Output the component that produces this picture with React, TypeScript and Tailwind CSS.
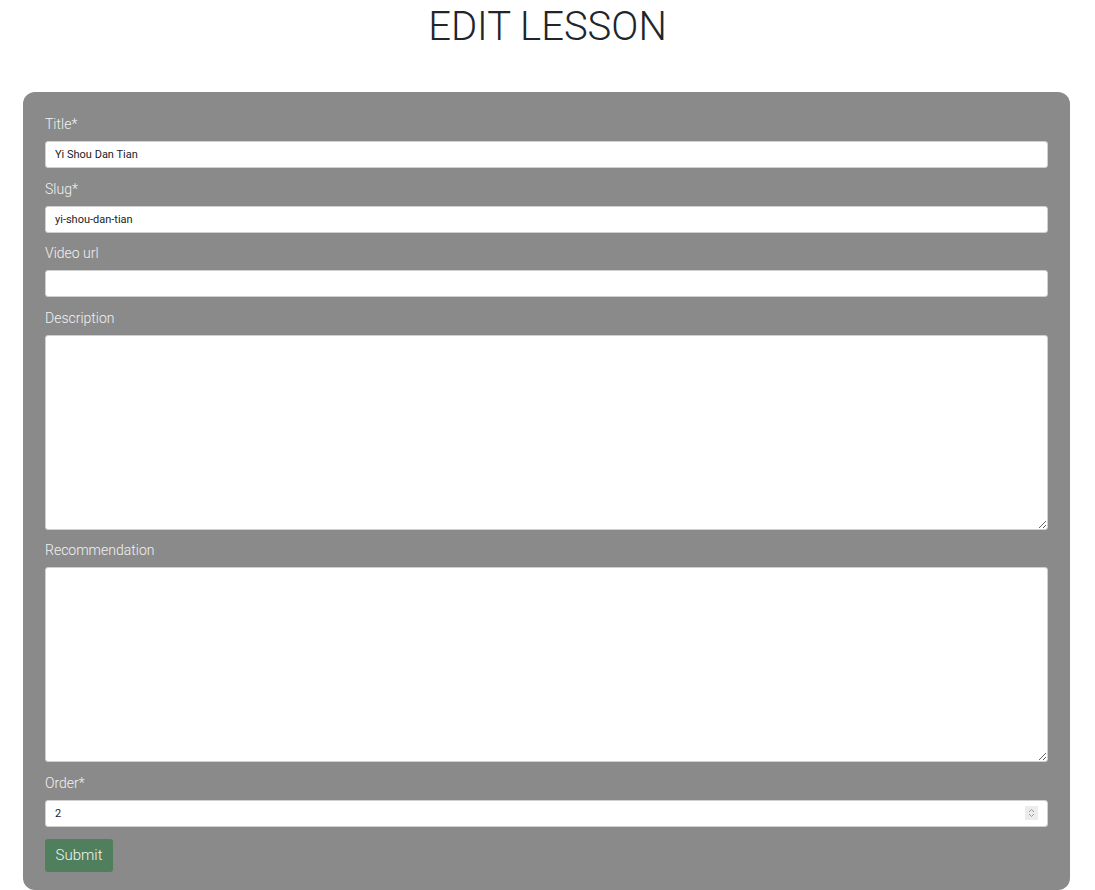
import React from "react";

const label = "block text-[14px] leading-5 font-light text-[#f2f2f2] mb-[7px]";
const input =
  "block w-full h-[27px] rounded-[3px] border border-[#d0d0d0] bg-white px-[9px] text-[11px] text-[#222] outline-none";
const area =
  "block w-full h-[195px] rounded-[3px] border border-[#d0d0d0] bg-white px-[9px] py-1 text-[11px] text-[#222] outline-none";

export default function App() {
  return (
    <div className="min-h-screen bg-white font-['Roboto',sans-serif] pt-[3px]">
      <h1 className="text-center text-[40px] leading-[48px] font-light text-[#212529] mb-[41px]">
        EDIT LESSON
      </h1>

      <form className="ml-[23px] w-[1047px] rounded-[12px] bg-[#8a8a8a] px-[22px] pt-[22px] pb-[18px]">
        <div className="mb-[10.5px]">
          <label className={label}>Title*</label>
          <input className={input} defaultValue="Yi Shou Dan Tian" />
        </div>
        <div className="mb-[10.5px]">
          <label className={label}>Slug*</label>
          <input className={input} defaultValue="yi-shou-dan-tian" />
        </div>
        <div className="mb-[10.5px]">
          <label className={label}>Video url</label>
          <input className={input} defaultValue="" />
        </div>
        <div className="mb-[10.5px]">
          <label className={label}>Description</label>
          <textarea className={area} />
        </div>
        <div className="mb-[10.5px]">
          <label className={label}>Recommendation</label>
          <textarea className={area} />
        </div>
        <div className="mb-3">
          <label className={label}>Order*</label>
          <div className="relative">
            <input className={input} defaultValue="2" />
            <div className="absolute right-[10px] top-[6px] w-[13px] h-[14px] bg-[#ececec] flex items-center justify-center">
              <svg width="7" height="10" viewBox="0 0 7 10" fill="none" stroke="#9a9a9a" strokeWidth="1">
                <path d="M1 4 L3.5 1.5 L6 4" />
                <path d="M1 6 L3.5 8.5 L6 6" />
              </svg>
            </div>
          </div>
        </div>
        <button
          type="button"
          className="h-[33px] w-[68px] rounded-[3px] bg-[#4f7f5c] text-[15px] font-light text-[#f4f4f4]"
        >
          Submit
        </button>
      </form>
    </div>
  );
}
